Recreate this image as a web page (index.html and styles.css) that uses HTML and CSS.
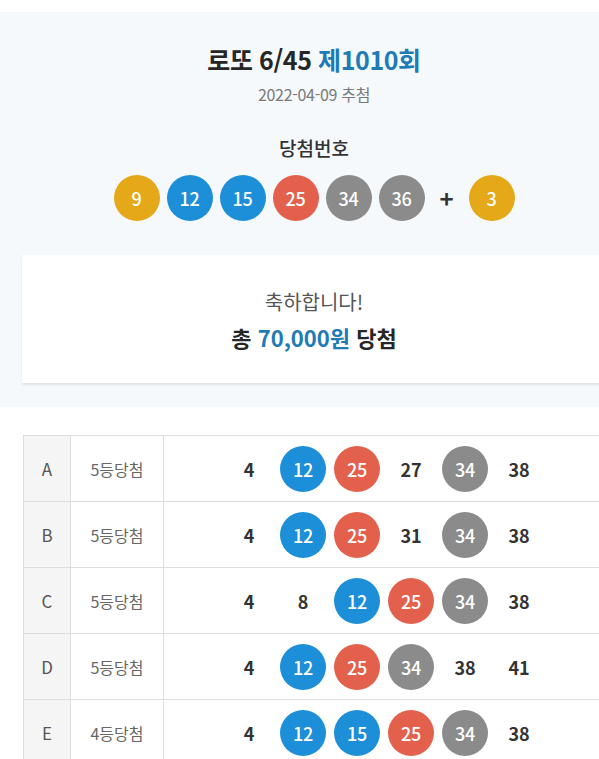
FILE: index.html
```html
<!DOCTYPE html>
<html lang="ko">
<head>
<meta charset="utf-8">
<title>로또 6/45 제1010회</title>
<link rel="stylesheet" href="styles.css">
</head>
<body>
<div class="page">
  <div class="top-strip"></div>
  <section class="hero">
    <h1 class="title">로또 6/45 <span class="round">제1010회</span></h1>
    <p class="date">2022-04-09 추첨</p>
    <h2 class="sub">당첨번호</h2>
    <div class="win-balls">
      <span class="ball y">9</span>
      <span class="ball b">12</span>
      <span class="ball b">15</span>
      <span class="ball r">25</span>
      <span class="ball g">34</span>
      <span class="ball g">36</span>
      <span class="plus">+</span>
      <span class="ball y">3</span>
    </div>
    <div class="card">
      <p class="congrats">축하합니다!</p>
      <p class="total">총 <span class="amount">70,000원</span> 당첨</p>
    </div>
  </section>
  <table class="results">
    <tr>
      <td class="c-letter">A</td>
      <td class="c-rank">5등당첨</td>
      <td class="c-nums"><div class="nums">
        <span class="n">4</span><span class="n"><span class="ball b">12</span></span><span class="n"><span class="ball r">25</span></span><span class="n">27</span><span class="n"><span class="ball g">34</span></span><span class="n">38</span>
      </div></td>
    </tr>
    <tr>
      <td class="c-letter">B</td>
      <td class="c-rank">5등당첨</td>
      <td class="c-nums"><div class="nums">
        <span class="n">4</span><span class="n"><span class="ball b">12</span></span><span class="n"><span class="ball r">25</span></span><span class="n">31</span><span class="n"><span class="ball g">34</span></span><span class="n">38</span>
      </div></td>
    </tr>
    <tr>
      <td class="c-letter">C</td>
      <td class="c-rank">5등당첨</td>
      <td class="c-nums"><div class="nums">
        <span class="n">4</span><span class="n">8</span><span class="n"><span class="ball b">12</span></span><span class="n"><span class="ball r">25</span></span><span class="n"><span class="ball g">34</span></span><span class="n">38</span>
      </div></td>
    </tr>
    <tr>
      <td class="c-letter">D</td>
      <td class="c-rank">5등당첨</td>
      <td class="c-nums"><div class="nums">
        <span class="n">4</span><span class="n"><span class="ball b">12</span></span><span class="n"><span class="ball r">25</span></span><span class="n"><span class="ball g">34</span></span><span class="n">38</span><span class="n">41</span>
      </div></td>
    </tr>
    <tr>
      <td class="c-letter">E</td>
      <td class="c-rank">4등당첨</td>
      <td class="c-nums"><div class="nums">
        <span class="n">4</span><span class="n"><span class="ball b">12</span></span><span class="n"><span class="ball b">15</span></span><span class="n"><span class="ball r">25</span></span><span class="n"><span class="ball g">34</span></span><span class="n">38</span>
      </div></td>
    </tr>
  </table>
</div>
</body>
</html>
```
FILE: styles.css
```css
html, body {
  margin: 0;
  padding: 0;
  background: #ffffff;
  overflow: hidden;
}
body {
  font-family: "Noto Sans CJK KR", "Noto Sans", sans-serif;
  color: #333;
}
.page {
  width: 628px;
}
.top-strip {
  height: 12px;
  background: #ffffff;
}
.hero {
  background: #f5f9fc;
  padding: 29px 22px 24px;
  text-align: center;
}
.title {
  margin: 0;
  font-size: 25px;
  line-height: 36px;
  font-weight: 700;
  color: #262626;
  letter-spacing: -0.4px;
}
.round {
  color: #1f7bb6;
}
.date {
  margin: 6px 0 0;
  font-size: 16px;
  line-height: 22px;
  color: #7a7a7a;
  letter-spacing: -0.3px;
}
.sub {
  margin: 29px 0 0;
  font-size: 19px;
  line-height: 28px;
  font-weight: 500;
  color: #333;
}
.win-balls {
  margin-top: 13px;
  display: flex;
  justify-content: center;
  align-items: center;
  gap: 7px;
}
.plus {
  width: 24px;
  text-align: center;
  font-size: 24px;
  font-weight: 700;
  color: #333;
  line-height: 46px;
  margin: 0 3px;
}
.ball {
  display: inline-flex;
  align-items: center;
  justify-content: center;
  width: 46px;
  height: 46px;
  border-radius: 50%;
  color: #fff;
  font-size: 18px;
  font-weight: 500;
  letter-spacing: -0.3px;
}
.ball.y { background: #e4a819; }
.ball.b { background: #1d8fd8; }
.ball.r { background: #e3604d; }
.ball.g { background: #8b8b8b; }
.card {
  margin-top: 34px;
  background: #fff;
  padding: 32px 0 30px;
  box-shadow: 0 2px 2px rgba(0, 0, 0, 0.09);
}
.congrats {
  margin: 0;
  font-size: 20px;
  line-height: 30px;
  color: #555;
}
.total {
  margin: 4px 0 0;
  font-size: 22px;
  line-height: 32px;
  font-weight: 700;
  color: #262626;
}
.amount {
  color: #1f7bb6;
}
.results {
  margin: 28px 0 0 23px;
  width: 582px;
  border-collapse: collapse;
}
.results td {
  border: 1px solid #dedede;
  height: 65px;
  padding: 0;
  text-align: center;
}
.c-letter {
  width: 46px;
  background: #f5f5f5;
  font-size: 17px;
  color: #555;
}
.c-rank {
  width: 92px;
  font-size: 16px;
  color: #666;
}
.nums {
  display: flex;
  justify-content: center;
  align-items: center;
}
.n {
  width: 54px;
  display: flex;
  justify-content: center;
  align-items: center;
  font-size: 18px;
  font-weight: 700;
  color: #333;
}
```
